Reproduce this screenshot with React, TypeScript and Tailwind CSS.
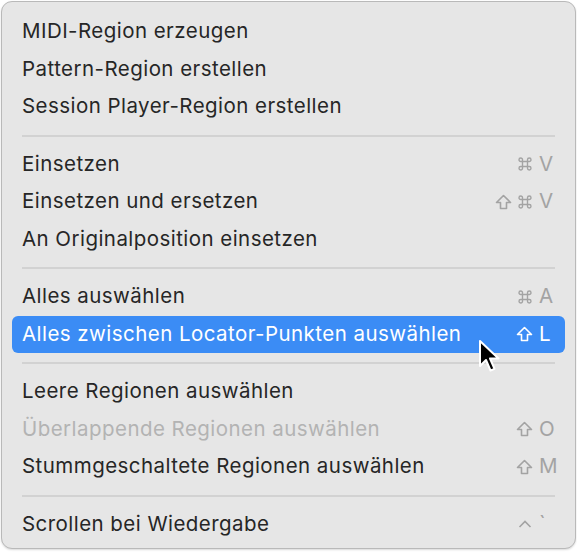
type Item = {
  label: string;
  mods?: string[];
  keyChar?: string;
  disabled?: boolean;
  active?: boolean;
};

const groups: Item[][] = [
  [
    { label: "MIDI-Region erzeugen" },
    { label: "Pattern-Region erstellen" },
    { label: "Session Player-Region erstellen" },
  ],
  [
    { label: "Einsetzen", mods: ["cmd"], keyChar: "V" },
    { label: "Einsetzen und ersetzen", mods: ["shift", "cmd"], keyChar: "V" },
    { label: "An Originalposition einsetzen" },
  ],
  [
    { label: "Alles auswählen", mods: ["cmd"], keyChar: "A" },
    { label: "Alles zwischen Locator-Punkten auswählen", mods: ["shift"], keyChar: "L", active: true },
  ],
  [
    { label: "Leere Regionen auswählen" },
    { label: "Überlappende Regionen auswählen", mods: ["shift"], keyChar: "O", disabled: true },
    { label: "Stummgeschaltete Regionen auswählen", mods: ["shift"], keyChar: "M" },
  ],
  [{ label: "Scrollen bei Wiedergabe", mods: ["ctrl"], keyChar: "`" }],
];

function ShiftIcon({ color }: { color: string }) {
  return (
    <svg width="17" height="16" viewBox="0 0 17 16" fill="none">
      <path
        d="M8.5 1.5 L15.5 8.5 H11.5 V14.5 H5.5 V8.5 H1.5 Z"
        stroke={color}
        strokeWidth="1.6"
        strokeLinejoin="round"
      />
    </svg>
  );
}

function CmdIcon({ color }: { color: string }) {
  return (
    <svg width="16" height="16" viewBox="0 0 16 16" fill="none">
      <path
        d="M5.5 5.5 H10.5 V10.5 H5.5 Z M5.5 5.5 V3.75 A1.75 1.75 0 1 0 3.75 5.5 H5.5 M10.5 5.5 V3.75 A1.75 1.75 0 1 1 12.25 5.5 H10.5 M10.5 10.5 V12.25 A1.75 1.75 0 1 0 12.25 10.5 H10.5 M5.5 10.5 V12.25 A1.75 1.75 0 1 1 3.75 10.5 H5.5"
        stroke={color}
        strokeWidth="1.4"
      />
    </svg>
  );
}

function CtrlIcon({ color }: { color: string }) {
  return (
    <svg width="16" height="16" viewBox="0 0 16 16" fill="none">
      <path d="M2.5 11 L8 5.5 L13.5 11" stroke={color} strokeWidth="1.6" />
    </svg>
  );
}

function Row({ item }: { item: Item }) {
  const textColor = item.active ? "text-white" : item.disabled ? "text-[#b3b3b3]" : "text-[#262626]";
  const modColor = item.active ? "#ffffff" : "#a3a3a3";
  return (
    <div
      className={`mx-[10px] flex h-[37.5px] items-center justify-between rounded-[6px] pl-[10px] pr-[10px] ${
        item.active ? "bg-[#3b8cf5]" : ""
      }`}
    >
      <span className={`text-[20.5px] tracking-[0.45px] ${textColor}`}>{item.label}</span>
      {item.keyChar && (
        <div className="flex items-center">
          <div className="flex items-center gap-[5px]">
            {item.mods?.map((m, i) =>
              m === "shift" ? (
                <ShiftIcon key={i} color={modColor} />
              ) : m === "cmd" ? (
                <CmdIcon key={i} color={modColor} />
              ) : (
                <CtrlIcon key={i} color={modColor} />
              )
            )}
          </div>
          <span
            className={`ml-[6px] w-[16px] text-[20.5px] ${item.active ? "text-white" : "text-[#a3a3a3]"}`}
          >
            {item.keyChar}
          </span>
        </div>
      )}
    </div>
  );
}

export default function App() {
  return (
    <div className="h-[553px] w-[577px] bg-white p-px" style={{ fontFamily: "Inter, 'Noto Sans', sans-serif" }}>
      <div className="relative flex h-[548px] w-[575px] flex-col rounded-[11px] border border-[#b9b9b9] bg-[#e6e6e6] pt-[11px] shadow-[0_1px_2px_rgba(0,0,0,0.15)]">
        {groups.map((group, gi) => (
          <div key={gi}>
            {gi > 0 && (
              <div className="flex h-[20px] items-center px-[20px]">
                <div className="h-[2px] w-full bg-[#d2d2d2]" />
              </div>
            )}
            {group.map((item, ii) => (
              <Row key={ii} item={item} />
            ))}
          </div>
        ))}

        {/* mouse pointer */}
        <svg
          className="absolute left-[476px] top-[337px]"
          width="26"
          height="36"
          viewBox="0 0 26 36"
        >
          <path
            d="M2 2 L2 27 L8 21 L12.5 31.5 L16.5 29.8 L12 19.5 L20.5 19.5 Z"
            fill="#000"
            stroke="#fff"
            strokeWidth="2"
            strokeLinejoin="round"
          />
        </svg>
      </div>
    </div>
  );
}
